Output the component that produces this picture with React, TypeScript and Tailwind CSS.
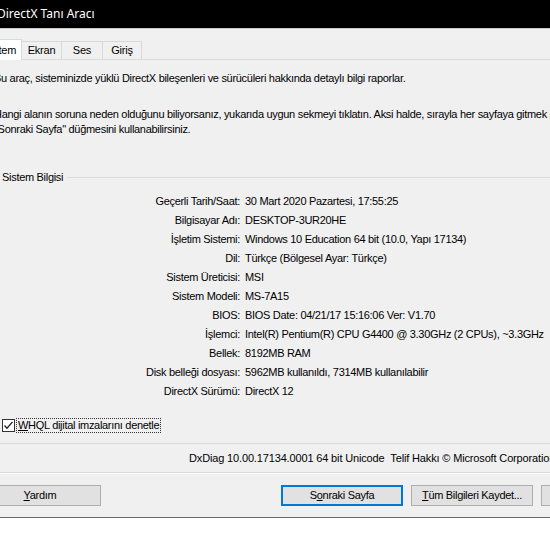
const rows: [string, string][] = [
  ['Geçerli Tarih/Saat:', '30 Mart 2020 Pazartesi, 17:55:25'],
  ['Bilgisayar Adı:', 'DESKTOP-3UR20HE'],
  ['İşletim Sistemi:', 'Windows 10 Education 64 bit (10.0, Yapı 17134)'],
  ['Dil:', 'Türkçe (Bölgesel Ayar: Türkçe)'],
  ['Sistem Üreticisi:', 'MSI'],
  ['Sistem Modeli:', 'MS-7A15'],
  ['BIOS:', 'BIOS Date: 04/21/17 15:16:06 Ver: V1.70'],
  ['İşlemci:', 'Intel(R) Pentium(R) CPU G4400 @ 3.30GHz (2 CPUs), ~3.3GHz'],
  ['Bellek:', '8192MB RAM'],
  ['Disk belleği dosyası:', '5962MB kullanıldı, 7314MB kullanılabilir'],
  ['DirectX Sürümü:', 'DirectX 12'],
]

const tabs = [
  { label: 'Ekran', w: 'w-[41px]' },
  { label: 'Ses', w: 'w-[42px]' },
  { label: 'Giriş', w: 'w-[40px]' },
]

function Button({ children, primary }: { children: React.ReactNode; primary?: boolean }) {
  return (
    <button
      className={
        'h-[21px] w-[122px] shrink-0 bg-[#e1e1e1] text-[11px] leading-none text-black tracking-[-0.3px] ' +
        (primary ? 'border-2 border-[#0078d7]' : 'border border-[#adadad]')
      }
    >
      {children}
    </button>
  )
}

export default function App() {
  return (
    <div
      className="w-[550px] h-[550px] overflow-hidden bg-white"
      style={{ fontFamily: '"Liberation Sans", Arial, sans-serif' }}
    >
      <div className="ml-[-30px] w-[710px] h-[518px] flex flex-col bg-[#f0f0f0] border-b border-[#6e6e6e]">
        {/* Title bar */}
        <div className="h-[29px] shrink-0 bg-black flex items-center pl-[27px] border-b border-[#c8c8c8]">
          <span className="text-white text-[12px]" style={{ fontFamily: '"Noto Sans", sans-serif' }}>
            DirectX Tanı Aracı
          </span>
        </div>

        {/* Tabs */}
        <div className="h-[30px] shrink-0 flex items-end pl-[8px] tracking-[-0.2px]">
          <div className="relative z-10 h-[21px] w-[44px] mb-[-1px] bg-white border border-b-0 border-[#d9d9d9] flex items-center justify-center text-[11px] text-black">
            Sistem
          </div>
          {tabs.map((t) => (
            <div
              key={t.label}
              className={`h-[18px] ${t.w} -ml-px border border-b-0 border-[#d9d9d9] bg-[#f0f0f0] flex items-center justify-center text-[11px] text-black`}
            >
              {t.label}
            </div>
          ))}
        </div>

        {/* Tab panel */}
        <div className="h-[385px] shrink-0 border-t border-b border-[#d9d9d9] bg-[#f0f0f0] pl-[24px] pt-[11px] text-[11px] leading-[15px] text-black tracking-[-0.3px]">
          <p className="whitespace-nowrap">Bu araç, sisteminizde yüklü DirectX bileşenleri ve sürücüleri hakkında detaylı bilgi raporlar.</p>
          <p className="mt-[21px] whitespace-nowrap">
            Hangi alanın soruna neden olduğunu biliyorsanız, yukarıda uygun sekmeyi tıklatın. Aksi halde, sırayla her sayfaya gitmek için
            <br />
            "Sonraki Sayfa" düğmesini kullanabilirsiniz.
          </p>

          {/* Group box */}
          <div className="mt-[33px] ml-[8px] flex items-center gap-[4px]">
            <span>Sistem Bilgisi</span>
            <div className="flex-1 h-px bg-[#dcdcdc]" />
          </div>
          <div className="mt-[7px] grid grid-cols-[246px_1fr] gap-x-[5px] whitespace-nowrap">
            {rows.map(([k, v]) => (
              <div key={k} className="contents">
                <div className="h-[19px] flex items-center justify-end">{k}</div>
                <div className="h-[19px] flex items-center">{v}</div>
              </div>
            ))}
          </div>

          {/* Checkbox */}
          <div className="mt-[17px] ml-[8px] flex items-center gap-px">
            <div className="w-[13px] h-[13px] border border-[#333] bg-white flex items-center justify-center">
              <svg width="11" height="11" viewBox="0 0 11 11">
                <path d="M1.5 5.5 L4 8.2 L9.5 1.8" fill="none" stroke="#222" strokeWidth="1.3" />
              </svg>
            </div>
            <span className="border border-dotted border-[#333] px-px leading-[13px]">
              <span className="underline">W</span>HQL dijital imzalarını denetle
            </span>
          </div>
        </div>

        {/* Status */}
        <div className="h-[29px] shrink-0 flex items-center pl-[219px] text-[11px] text-black border-b border-[#dadada] whitespace-nowrap tracking-[-0.15px]">
          DxDiag 10.00.17134.0001 64 bit Unicode&nbsp;&nbsp;Telif Hakkı © Microsoft Corporation. Tüm hakları saklıdır.
        </div>
        <div className="h-px bg-white" />

        {/* Buttons */}
        <div className="mt-[11px] flex pl-[9px]">
          <Button>
            <span className="underline">Y</span>ardım
          </Button>
          <div className="ml-[180px] flex gap-[8px]">
            <Button primary>
              S<span className="underline">o</span>nraki Sayfa
            </Button>
            <Button>
              <span className="underline">T</span>üm Bilgileri Kaydet...
            </Button>
            <Button>Çıkış</Button>
          </div>
        </div>
      </div>
    </div>
  )
}
